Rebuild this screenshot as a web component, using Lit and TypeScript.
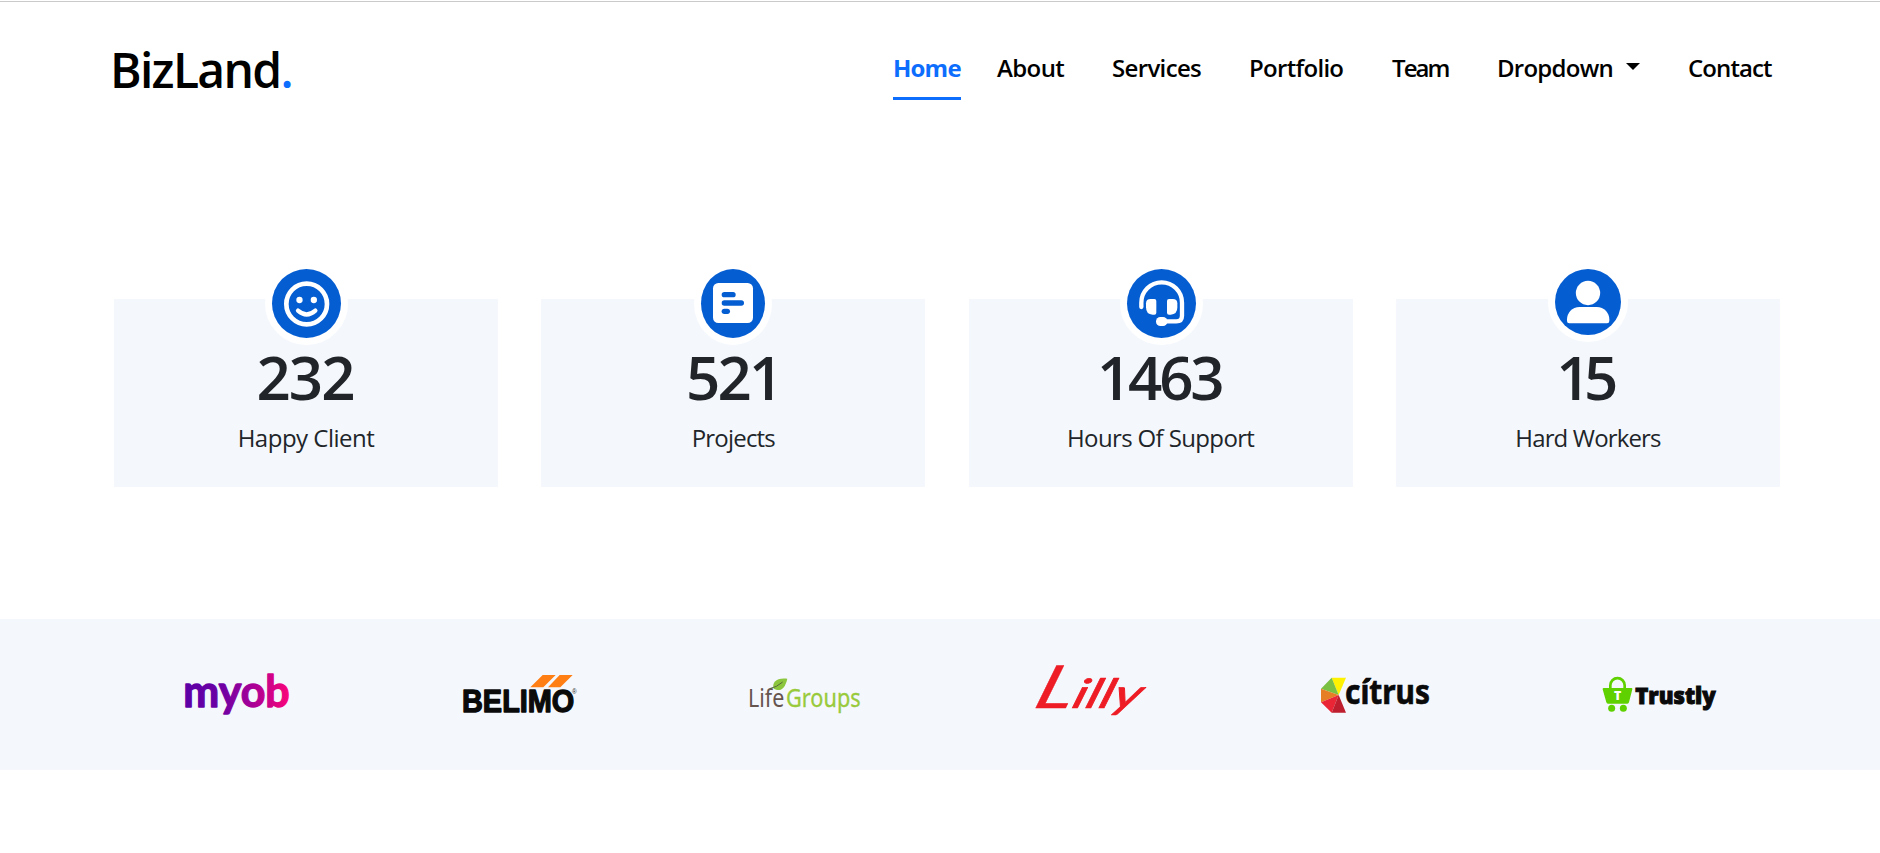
import { LitElement, html, svg, css } from "lit";
import { customElement } from "lit/decorators.js";
import { classMap } from "lit/directives/class-map.js";

const BLUE = "#055dd2";

const NAV = [
  { label: "Home", width: 68, gap: 36, track: -0.8, active: true },
  { label: "About", width: 67, gap: 48, track: -0.6 },
  { label: "Services", width: 89, gap: 48, track: -0.65 },
  { label: "Portfolio", width: 95, gap: 48, track: -0.7 },
  { label: "Team", width: 57, gap: 48, track: -1.9 },
  { label: "Dropdown", width: 143, gap: 48, track: -0.75, caret: true },
  { label: "Contact", width: 84, gap: 0, track: -0.9 },
];

const smile = html`<svg class="icon" width="69" height="69" viewBox="516 57 207 207" fill="#fff">
  <circle cx="620" cy="162" r="61" fill="none" stroke="#fff" stroke-width="14" />
  <circle cx="598.500" cy="150" r="9.500" />
  <circle cx="641.500" cy="150" r="9.500" />
  <path d="M594 182Q620 205 646 182" fill="none" stroke="#fff" stroke-width="13" stroke-linecap="round" />
</svg>`;

const article = html`<svg class="icon" width="64" height="69" viewBox="513 57 192 207">
  <rect x="549" y="99" width="120" height="120" rx="16" fill="#fff" />
  <g fill=${BLUE}>
    <rect x="575" y="126" width="42" height="16" rx="8" />
    <rect x="575" y="151" width="67" height="16" rx="8" />
    <rect x="575" y="176" width="25" height="16" rx="8" />
  </g>
</svg>`;

const headset = html`<svg class="icon" width="69" height="69" viewBox="501 57 207 207" fill="#fff">
  <path d="M544 171V158A61 61 0 0 1 666 158V197Q666 214 649 214H610" fill="none" stroke="#fff" stroke-width="13" stroke-linecap="round" />
  <path d="M572 147H583Q589 147 589 153V188Q589 194 583 194H578Q558 194 558 172V160Q558 147 572 147Z" />
  <path d="M638 147H627Q621 147 621 153V188Q621 194 627 194H632Q652 194 652 172V160Q652 147 638 147Z" />
  <rect x="588" y="201" width="34" height="27" rx="13" />
</svg>`;

const person = html`<svg class="icon" width="66" height="66" viewBox="525 57 198 198" fill="#fff">
  <circle cx="624" cy="129" r="36.500" />
  <path d="M599 171H650C673 171 688 189 688 208V213Q688 220 681 220H568Q561 220 561 213V208C561 189 576 171 599 171Z" />
</svg>`;

const STATS = [
  { value: "232", label: "Happy Client", icon: smile, valueTrack: -1.9, indent: -2, labelTrack: -0.5 },
  { value: "521", label: "Projects", icon: article, valueTrack: -2.7, indent: 0, labelTrack: -0.8 },
  { value: "1463", label: "Hours Of Support", icon: headset, valueTrack: -3.2, indent: -3, labelTrack: -0.63 },
  { value: "15", label: "Hard Workers", icon: person, valueTrack: -6.5, indent: -8, labelTrack: -0.85 },
];

const CLIENTS = [
  svg`<defs><linearGradient id="mg" gradientUnits="userSpaceOnUse" x1="84" y1="0" x2="396" y2="0">
      <stop offset="0" stop-color="#5c00a6"/><stop offset=".35" stop-color="#6d00a4"/><stop offset=".65" stop-color="#a80097"/><stop offset="1" stop-color="#fa0578"/>
    </linearGradient></defs>
    <text class="lato round" x="79" y="172" font-size="130" font-weight="700" fill="url(#mg)" stroke="url(#mg)" stroke-width="4" textLength="319" lengthAdjust="spacingAndGlyphs">myob</text>`,
  svg`<path d="M265 112L302 75H341L304 112ZM318 112L353 75H392L355 112Z" fill="#ff7f14"/>
    <text class="arial round" x="60" y="186" font-size="94" font-weight="700" fill="#0a0a0a" stroke="#0a0a0a" stroke-width="4" textLength="337" lengthAdjust="spacingAndGlyphs">BELIMO</text>
    <text class="arial" x="390" y="132" font-size="19" fill="#222">®</text>`,
  svg`<text class="noto" x="66" y="171" font-size="78" fill="#66544f" textLength="109" lengthAdjust="spacingAndGlyphs">Life</text>
    <text class="noto" x="180" y="171" font-size="78" fill="#99ca3c" stroke="#99ca3c" stroke-width="1" textLength="224" lengthAdjust="spacingAndGlyphs">Groups</text>
    <path d="M143 116C137 96 152 82 184 86C178 112 166 128 143 116Z" fill="#8cc63f"/>
    <path d="M131 116Q152 112 170 96" fill="none" stroke="#55663b" stroke-width="3"/>`,
  svg`<g fill="#ee1c25" stroke="#ee1c25">
      <text class="lato round" transform="translate(62 173) skewX(-18)" x="0" y="0" font-size="178" font-style="italic" stroke-width="1" textLength="114" lengthAdjust="spacingAndGlyphs">L</text>
      <text class="lato round" transform="translate(178 173) skewX(-18)" x="0" y="0" font-size="122" font-style="italic" stroke-width="2" textLength="204" lengthAdjust="spacingAndGlyphs">illy</text>
    </g>`,
  svg`<path d="M107 83H150L128 135Z" fill="#fff200"/>
    <path d="M107 83L75 116L128 135Z" fill="#7ac143"/>
    <path d="M75 116V157L128 135Z" fill="#e67e25"/>
    <path d="M75 157L107 188L128 135Z" fill="#e92536"/>
    <path d="M107 188H150L128 135Z" fill="#be1e2d"/>
    <text class="noto" x="147" y="163" font-size="101" font-weight="700" fill="#0a0a0a" stroke="#0a0a0a" stroke-width="2" textLength="255" lengthAdjust="spacingAndGlyphs">cítrus</text>
    <path d="M202 98Q204 84 224 85Q222 101 202 98Z" fill="#0a0a0a"/>`,
  svg`<path d="M91 114V106A21.500 21.500 0 0 1 134 106V114" fill="none" stroke="#5fd000" stroke-width="8"/>
    <path d="M72 114H154Q158 114 157 118L147 157Q146 161 142 161H84Q80 161 79 157L68 118Q67 114 72 114Z" fill="#5fd000"/>
    <circle cx="95" cy="175" r="10.500" fill="#5fd000"/><circle cx="130" cy="175" r="10.500" fill="#5fd000"/>
    <text class="open" x="102" y="150" font-size="34" font-weight="800" fill="#fff" textLength="22" lengthAdjust="spacingAndGlyphs">T</text>
    <text class="open" x="166" y="163" font-size="67" font-weight="800" fill="#0a0a0a" stroke="#0a0a0a" stroke-width="3" textLength="241" lengthAdjust="spacingAndGlyphs">Trustly</text>`,
];

@customElement("app-root")
class AppRoot extends LitElement {
  static styles = css`
    :host {
      display: block;
      height: 853px;
      overflow: hidden;
      background: #fff;
      color: #212529;
      font-family: "Open Sans", "Noto Sans", sans-serif;
    }
    .page { display: flex; flex-direction: column; }
    .rule { height: 1px; margin-top: 1px; background: #cacaca; }
    header {
      display: flex;
      justify-content: space-between;
      align-items: flex-start;
      height: 297px;
      box-sizing: border-box;
      padding: 34px 108px 0 110px;
      color: #000;
    }
    .brand {
      margin-top: 2px;
      font-size: 48px;
      line-height: 64px;
      font-weight: 600;
      letter-spacing: -1.7px;
      white-space: nowrap;
    }
    .dot { color: #0d6efd; }
    nav { display: flex; margin-top: 14px; }
    .link {
      box-sizing: border-box;
      height: 50px;
      display: flex;
      gap: 13px;
      font-size: 24px;
      line-height: 36px;
      font-weight: 600;
      white-space: nowrap;
    }
    .active { color: #0d6efd; font-weight: 700; border-bottom: 3px solid #0d6efd; }
    .caret {
      width: 0;
      height: 0;
      margin-top: 13px;
      border: 7px solid transparent;
      border-top-color: #000;
      border-bottom: 0;
    }
    .stats {
      display: grid;
      grid-template-columns: repeat(4, 384px);
      justify-content: space-between;
      padding: 0 100px 0 114px;
    }
    .card {
      position: relative;
      height: 188px;
      box-sizing: border-box;
      padding-top: 42px;
      background: #f4f8fd;
      text-align: center;
    }
    .badge {
      position: absolute;
      top: -37px;
      left: 0;
      right: 0;
      display: flex;
      justify-content: center;
    }
    .card:nth-child(3) .badge { left: 1px; }
    .disc { display: flex; border: 7px solid #fff; border-radius: 50%; background: #fff; }
    .icon { display: block; border-radius: 50%; background: #055dd2; }
    .value { font-size: 60px; line-height: 72px; font-weight: 600; }
    .label { margin-top: 7px; font-size: 24px; line-height: 36px; }
    .clients {
      display: grid;
      grid-template-columns: repeat(6, 284.67px);
      justify-items: center;
      height: 151px;
      box-sizing: border-box;
      margin-top: 132px;
      padding: 31px 0 0 94.67px;
      background: #f4f8fd;
    }
    .round { stroke-linejoin: round; }
    .lato { font-family: Lato, sans-serif; }
    .arial { font-family: "Liberation Sans", sans-serif; }
    .noto { font-family: "Noto Sans", sans-serif; }
    .open { font-family: "Open Sans", sans-serif; }
  `;

  render() {
    return html`<div class="page">
      <div class="rule"></div>
      <header>
        <div class="brand">BizLand<span class="dot">.</span></div>
        <nav>
          ${NAV.map(
            (n) => html`<div
              class=${classMap({ link: true, active: !!n.active })}
              style="width:${n.width}px;margin-right:${n.gap}px;letter-spacing:${n.track}px"
            ><span>${n.label}</span>${n.caret ? html`<span class="caret"></span>` : ""}</div>`
          )}
        </nav>
      </header>
      <main class="stats">
        ${STATS.map(
          (s) => html`<div class="card">
            <div class="badge"><div class="disc">${s.icon}</div></div>
            <div class="value" style="letter-spacing:${s.valueTrack}px;text-indent:${s.indent}px">${s.value}</div>
            <div class="label" style="letter-spacing:${s.labelTrack}px">${s.label}</div>
          </div>`
        )}
      </main>
      <section class="clients">
        ${CLIENTS.map((c) => html`<svg width="160" height="80" viewBox="0 0 480 240">${c}</svg>`)}
      </section>
    </div>`;
  }
}
